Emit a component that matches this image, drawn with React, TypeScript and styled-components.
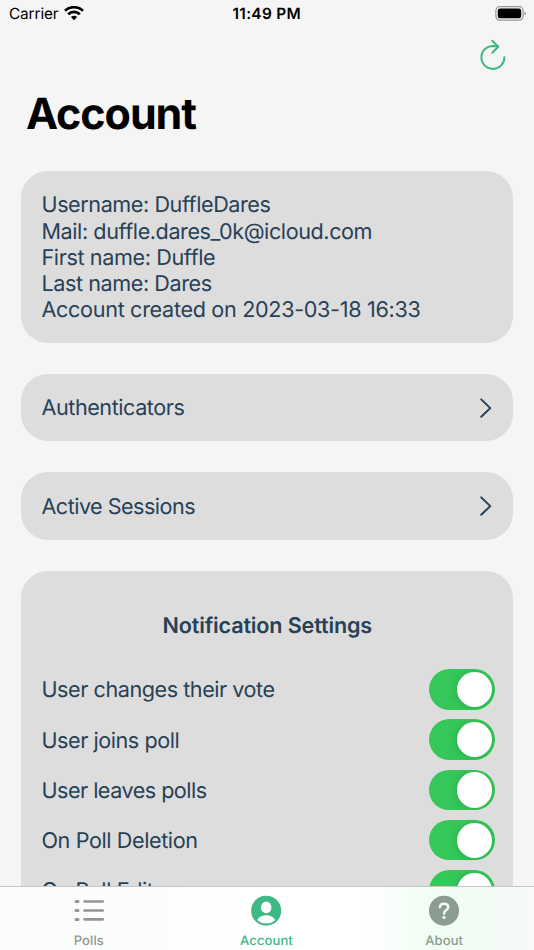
import React from "react";
import styled, { createGlobalStyle } from "styled-components";

const Global = createGlobalStyle`
  * { box-sizing: border-box; }
  html, body { margin: 0; padding: 0; height: 950px; overflow: hidden; background: #f5f5f5; }
  body {
    font-family: Inter, "Liberation Sans", sans-serif;
    -webkit-font-smoothing: antialiased;
    text-rendering: geometricPrecision;
  }
`;

const Screen = styled.div`
  width: 534px;
  height: 950px;
  display: flex;
  flex-direction: column;
  overflow: hidden;
  background: #f5f5f5;
  color: #274156;
`;

const StatusBar = styled.header`
  flex: none;
  height: 28px;
  display: grid;
  grid-template-columns: 1fr auto 1fr;
  align-items: center;
  padding: 0 7px 0 9px;
  color: #000;
  font-size: 15.4px;
  line-height: 28px;
`;

const Carrier = styled.div`
  display: flex;
  align-items: center;
  gap: 5.5px;
  letter-spacing: -0.13px;

  svg { margin-bottom: 1.4px; }
`;

const Clock = styled.time`
  font-weight: 600;
  letter-spacing: 0.3px;
  margin-right: 2.5px;
`;

const BatteryIcon = styled.svg`
  justify-self: end;
  display: block;
`;

const Header = styled.div`
  flex: none;
  height: 142.5px;
  display: flex;
  flex-direction: column;
  padding: 10px 26px 0;
`;

const RefreshButton = styled.button`
  align-self: flex-end;
  width: 30px;
  height: 34px;
  padding: 0;
  border: 0;
  background: none;
`;

const Title = styled.h1`
  margin: 14px 0 0;
  color: #000;
  font-size: 43px;
  font-weight: 700;
  line-height: 56px;
  letter-spacing: -1.05px;
`;

const Content = styled.main`
  flex: 1;
  min-height: 0;
  overflow: hidden;
  display: flex;
  flex-direction: column;
  gap: 31.2px;
  padding: 0 21px;
`;

const Card = styled.section`
  flex: none;
  border-radius: 27px;
  background: #ddd;
  padding: 21px 18px 20px 20.5px;
`;

const DetailsCard = styled(Card)`
  padding-top: 21.8px;
  padding-bottom: 19.2px;
`;

const Line = styled.p<{ $spacing: number }>`
  margin: 0;
  font-size: 21.6px;
  line-height: 26.25px;
  white-space: nowrap;
  letter-spacing: ${(p) => p.$spacing}px;
`;

const RowLabel = styled(Line)`
  padding-top: 2px;
`;

const LinkCard = styled(Card)`
  height: 67.3px;
  display: flex;
  align-items: center;
  justify-content: space-between;
  padding: 0 20px 0 20.5px;
`;

const SettingsTitle = styled.h2`
  margin: 21px 0 25.3px;
  font-size: 21.6px;
  font-weight: 600;
  line-height: 26px;
  letter-spacing: -0.16px;
  text-align: center;
  padding-right: 2px;
`;

const SettingRow = styled.label`
  height: 50.3px;
  display: flex;
  align-items: center;
  justify-content: space-between;
`;

const Toggle = styled.span`
  width: 66px;
  height: 40.4px;
  padding: 2.6px;
  display: flex;
  justify-content: flex-end;
  border-radius: 21px;
  background: #35c759;
`;

const Knob = styled.span`
  width: 35.2px;
  height: 35.2px;
  border-radius: 50%;
  background: #fff;
  box-shadow: -1px 1px 8px rgba(0, 0, 0, 0.15);
  clip-path: inset(-2.6px -2.6px -2.6px -12px round 21px);
`;

const TabBar = styled.nav`
  flex: none;
  height: 64px;
  display: grid;
  grid-template-columns: repeat(3, 1fr);
  padding-right: 1px;
  border-top: 1px solid #c6c6c6;
  background: linear-gradient(90deg, #fbfdfc 0%, #fcfefd 32%, #fff 45%, #fff 68%, #f0fdf4 82%, #f3fbf5 92%, #f9f9f9 100%);
`;

const Tab = styled.a<{ $color: string }>`
  display: flex;
  flex-direction: column;
  align-items: center;
  padding-top: 8px;
  gap: 6px;
  color: ${(p) => p.$color};
  font-size: 13px;
  font-weight: 500;
  line-height: 16px;
  letter-spacing: 0.1px;

  svg { display: block; }
`;

const details = [
  { text: "Username: DuffleDares", spacing: -0.43 },
  { text: "Mail: duffle.dares_0k@icloud.com", spacing: -0.42 },
  { text: "First name: Duffle", spacing: -0.38 },
  { text: "Last name: Dares", spacing: -0.43 },
  { text: "Account created on 2023-03-18 16:33", spacing: -0.32 },
];

const links = [
  { text: "Authenticators", spacing: -0.45 },
  { text: "Active Sessions", spacing: -0.53 },
];

const settings = [
  { text: "User changes their vote", spacing: -0.45 },
  { text: "User joins poll", spacing: -0.45 },
  { text: "User leaves polls", spacing: -0.52 },
  { text: "On Poll Deletion", spacing: -0.4 },
  { text: "On Poll Edit", spacing: -0.42 },
];

const Chevron = () => (
  <svg width="14" height="22" viewBox="0 0 14 22" fill="none" stroke="currentColor" strokeWidth="2" strokeLinecap="round" strokeLinejoin="round">
    <path d="M2.2 2.4 11.3 11.1 2.2 19.8" />
  </svg>
);

export default function App() {
  return (
    <>
      <Global />
      <Screen>
        <StatusBar>
          <Carrier>
            <span>Carrier</span>
            <svg width="20" height="15" viewBox="0 0 20 15" fill="none" stroke="#000" strokeWidth="2.7">
              <path d="M1 4.8a13 13 0 0 1 18 0" />
              <path d="M4.2 8.3a8.3 8.3 0 0 1 11.6 0" />
              <path d="M10 14.2 6.9 11.1a4.5 4.5 0 0 1 6.2 0Z" fill="#000" stroke="none" />
            </svg>
          </Carrier>
          <Clock>11:49 PM</Clock>
          <BatteryIcon width="32" height="16" viewBox="0 0 32 16">
            <rect x="0.9" y="0.7" width="27.2" height="13.4" rx="4" fill="none" stroke="#999" strokeWidth="1.3" />
            <rect x="2.8" y="2.6" width="23.4" height="9.6" rx="2.2" />
            <path d="M29.6 5.2c2 .8 2 3.6 0 4.4Z" fill="#999" />
          </BatteryIcon>
        </StatusBar>
        <Header>
          <RefreshButton aria-label="Refresh">
            <svg width="30" height="34" viewBox="0 0 30 34" fill="none" stroke="#40b883" strokeWidth="2" strokeLinecap="round" strokeLinejoin="round">
              <path d="M26.4 19.2A11.5 11.5 0 1 1 14.9 7.9L19.9 8.3" />
              <path d="M14.3 2.8 20.2 8.7 14.3 14.7" />
            </svg>
          </RefreshButton>
          <Title>Account</Title>
        </Header>
        <Content>
          <DetailsCard>
            {details.map(({ text, spacing }) => (
              <Line key={text} $spacing={spacing}>{text}</Line>
            ))}
          </DetailsCard>
          {links.map(({ text, spacing }) => (
            <LinkCard key={text}>
              <RowLabel $spacing={spacing}>{text}</RowLabel>
              <Chevron />
            </LinkCard>
          ))}
          <Card>
            <SettingsTitle>Notification Settings</SettingsTitle>
            {settings.map(({ text, spacing }) => (
              <SettingRow key={text}>
                <RowLabel $spacing={spacing}>{text}</RowLabel>
                <Toggle><Knob /></Toggle>
              </SettingRow>
            ))}
          </Card>
        </Content>
        <TabBar>
          <Tab $color="#949494">
            <svg width="32" height="32" viewBox="0 0 32 32" fill="none" stroke="currentColor" strokeLinecap="round">
              <path strokeWidth="3" d="M3 6.5h2M3 15.5h2M3 24.4h2" />
              <path strokeWidth="2.6" d="M11.5 6.5h18.2M11.5 15.5h18.2M11.5 24.4h18.2" />
            </svg>
            <span>Polls</span>
          </Tab>
          <Tab $color="#40b883">
            <svg width="32" height="32" viewBox="0 0 32 32">
              <circle cx="16.2" cy="15.7" r="15" fill="currentColor" />
              <ellipse cx="16.2" cy="12.4" rx="5.2" ry="5.8" fill="#fff" />
              <path d="M7.2 25c1.6-3 5-4.8 9-4.8s7.400 1.8 9 4.800c-2.400 2.300-5.500 3.600-9 3.600S9.600 27.300 7.200 25Z" fill="#fff" />
            </svg>
            <span>Account</span>
          </Tab>
          <Tab $color="#8b9c90">
            <svg width="32" height="32" viewBox="0 0 32 32" fill="none">
              <circle cx="16" cy="15.7" r="15" fill="currentColor" />
              <path d="M11.9 12.2c.3-2.200 1.900-3.400 4.200-3.400 2.400 0 4.100 1.300 4.100 3.400 0 3.200-4.200 3-4.200 6.200" stroke="#f3fdf6" strokeWidth="2.5" strokeLinecap="round" />
              <circle cx="16" cy="22.4" r="1.7" fill="#f3fdf6" />
            </svg>
            <span>About</span>
          </Tab>
        </TabBar>
      </Screen>
    </>
  );
}
